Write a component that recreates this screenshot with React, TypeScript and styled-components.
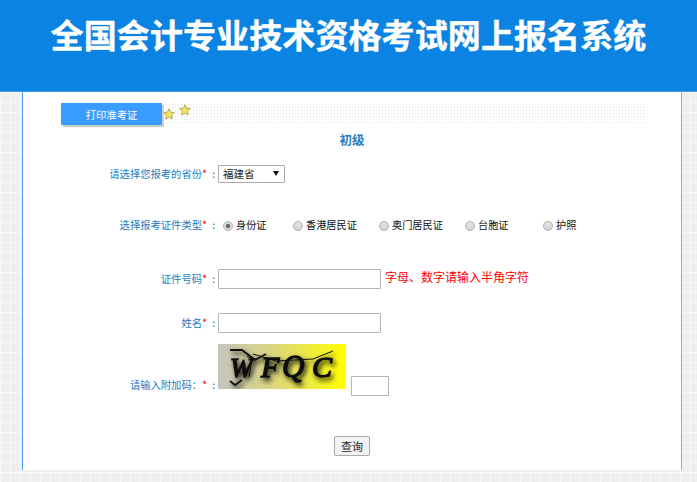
import React from 'react'
import styled, { createGlobalStyle } from 'styled-components'

const GlobalStyle = createGlobalStyle`
  html, body {
    margin: 0;
    padding: 0;
    height: 100%;
    overflow: hidden;
  }
  body {
    font-family: "Noto Sans CJK SC", "Liberation Sans", sans-serif;
    font-size: 10.3px;
    background-color: #efefef;
    background-image:
      linear-gradient(#f8f8f8 1px, transparent 1px),
      linear-gradient(90deg, #f8f8f8 1px, transparent 1px);
    background-size: 10px 10px;
    background-position: 0 2px;
  }
`

const Header = styled.header`
  height: 92px;
  background: #0a83e2;
  border-bottom: 1px solid #3c9df0;
  display: flex;
  justify-content: center;
  padding-top: 12px;
  box-sizing: border-box;
`

const Title = styled.h1`
  margin: 0;
  font-size: 33px;
  line-height: 44px;
  letter-spacing: 0.1px;
  font-weight: 700;
  color: #fff;
  white-space: nowrap;
  -webkit-text-stroke: 0.4px #fff;
`

const Panel = styled.main`
  width: 660px;
  height: 378px;
  margin-left: 22px;
  box-sizing: border-box;
  background: #fff;
  border-left: 1px solid #4a9ff0;
  border-right: 1px solid #7db6ee;
  padding-top: 11px;
`

const TabBar = styled.div`
  position: relative;
  width: 583px;
  height: 22px;
  margin-left: 38px;
  display: flex;
`

const Tab = styled.div`
  width: 101px;
  height: 22px;
  background: #3b9cff;
  color: #fff;
  font-size: 10.3px;
  line-height: 23px;
  text-align: center;
  box-shadow: 2px 2px 0 #ccc;
`

const Dots = styled.div`
  flex: 1;
  height: 20px;
  background-image: radial-gradient(#e2e2e2 0.8px, transparent 0.9px);
  background-size: 3px 3px;
`

const Star = styled.svg<{ $left: number; $top: number }>`
  position: absolute;
  left: ${(p) => p.$left}px;
  top: ${(p) => p.$top}px;
  width: 12px;
  height: 12px;
`

const Level = styled.div`
  margin-top: 6px;
  height: 18px;
  line-height: 18px;
  text-align: center;
  font-size: 12.5px;
  font-weight: 700;
  color: #2a7fc0;
`

const Row = styled.div<{ $height: number; $top?: number; $align?: string }>`
  display: flex;
  align-items: ${(p) => p.$align || 'center'};
  height: ${(p) => p.$height}px;
  margin-top: ${(p) => p.$top || 0}px;
`

const Label = styled.div<{ $top?: number }>`
  width: 192px;
  padding: ${(p) => p.$top || 0}px 0 2px 0;
  flex: none;
  text-align: right;
  color: #1a7cc0;
  font-size: 10.3px;
  white-space: nowrap;
`

const Req = styled.span`
  color: #f00;
  font-size: 11px;
`

const Colon = styled.span`
  margin-left: 5px;
  color: #1a5f90;
`

const Select = styled.div`
  width: 67px;
  height: 18px;
  margin-left: 3px;
  box-sizing: border-box;
  border: 1px solid #aaa;
  border-radius: 1px;
  padding-left: 4px;
  color: #222;
  line-height: 16px;
  display: flex;
  justify-content: space-between;
  font-size: 10.5px;
`

const Caret = styled.span`
  width: 0;
  height: 0;
  margin: 5px 5px 0 0;
  border-left: 3px solid transparent;
  border-right: 3px solid transparent;
  border-top: 5px solid #111;
`

const Radios = styled.div`
  display: flex;
  margin-left: 8px;
`

const RadioItem = styled.label<{ $width: number }>`
  display: flex;
  align-items: center;
  gap: 3px;
  width: ${(p) => p.$width}px;
  padding-bottom: 2px;
  color: #111;
  font-size: 10.2px;
  white-space: nowrap;
`

const RadioDot = styled.span<{ $on?: boolean }>`
  width: 10px;
  height: 10px;
  margin-top: 4px;
  border-radius: 50%;
  box-sizing: border-box;
  border: 1px solid #b0b0b0;
  background: ${(p) =>
    p.$on
      ? 'radial-gradient(circle, #666 0 1.8px, #dedede 2.6px)'
      : 'linear-gradient(#e2e2e2, #d4d4d4)'};
`

const TextInput = styled.input`
  width: 163px;
  height: 20px;
  margin-left: 3px;
  box-sizing: border-box;
  border: 1px solid #b4b4b4;
  border-radius: 1px;
  padding: 0;
  background: #fff;
`

const Hint = styled.span`
  margin: 0 0 6px 4px;
  color: #f00;
  font-size: 12px;
  white-space: nowrap;
`

const CaptchaField = styled.div`
  display: flex;
  align-items: flex-end;
  margin-left: 3px;
`

const CaptchaInput = styled.input`
  width: 38px;
  height: 20px;
  margin-left: 5px;
  margin-bottom: -7px;
  box-sizing: border-box;
  border: 1px solid #b4b4b4;
  border-radius: 1px;
  padding: 0;
  background: #fff;
`

const CaptchaImage = styled.svg`
  display: block;
  width: 128px;
  height: 45px;
`

const SubmitRow = styled.div`
  display: flex;
  margin-top: 47px;
  padding-left: 311px;
`

const Submit = styled.button`
  width: 36px;
  height: 20px;
  padding: 0;
  box-sizing: border-box;
  border: 1px solid #aaa;
  border-radius: 2px;
  background: #f2f2f2;
  color: #222;
  font-family: inherit;
  font-size: 11px;
  line-height: 16px;
`

const starPath = 'M6 .8 7.6 4.2 11.3 4.7 8.6 7.2 9.3 11 6 9.1 2.7 11 3.4 7.2.7 4.7 4.4 4.2Z'

function StarIcon({ left, top }: { left: number; top: number }) {
  return (
    <Star $left={left} $top={top} viewBox="0 0 12 12">
      <path d={starPath} fill="#f4e35c" stroke="#a89a3a" strokeWidth="0.8" strokeLinejoin="round" />
    </Star>
  )
}

function Captcha() {
  return (
    <CaptchaImage viewBox="0 0 128 45">
      <defs>
        <linearGradient id="captchaBg" x1="0" x2="1" y1="0" y2="0">
          <stop offset="0" stopColor="#c4c4c0" />
          <stop offset="0.45" stopColor="#dcd77a" />
          <stop offset="1" stopColor="#ffff00" />
        </linearGradient>
        <filter id="captchaShadow" x="-20%" y="-30%" width="140%" height="160%">
          <feDropShadow dx="2" dy="3" stdDeviation="2.6" floodColor="#000" floodOpacity="0.9" />
        </filter>
      </defs>
      <rect width="128" height="45" fill="url(#captchaBg)" />
      <g
        filter="url(#captchaShadow)"
        fontFamily="Liberation Serif, serif"
        fontStyle="italic"
        fill="#111"
        stroke="#111"
        strokeWidth="1.4"
      >
        <text x="12" y="33" fontSize="27">W</text>
        <text x="43" y="33" fontSize="30">F</text>
        <text x="64" y="33" fontSize="31">Q</text>
        <text x="94" y="33" fontSize="30">C</text>
        <path d="M12 6 24 6 37 16 48 10" fill="none" strokeWidth="1.8" />
        <path d="M29 12 34 15 31 33" fill="none" strokeWidth="1" />
        <path d="M35 10 58 17 95 15 115 7" fill="none" strokeWidth="1" />
        <path d="M12 37 17 41 24 36" fill="none" strokeWidth="1.8" />
      </g>
    </CaptchaImage>
  )
}

const idTypes = [
  { name: '身份证', width: 70, on: true },
  { name: '香港居民证', width: 86 },
  { name: '奥门居民证', width: 86 },
  { name: '台胞证', width: 78 },
  { name: '护照', width: 50 },
]

export default function App() {
  return (
    <>
      <GlobalStyle />
      <Header>
        <Title>全国会计专业技术资格考试网上报名系统</Title>
      </Header>
      <Panel>
        <TabBar>
          <Tab>打印准考证</Tab>
          <Dots />
          <StarIcon left={102} top={5} />
          <StarIcon left={118} top={1} />
        </TabBar>
        <Level>初级</Level>
        <Row $height={20} $top={15}>
          <Label>
            请选择您报考的省份<Req>*</Req>
            <Colon>:</Colon>
          </Label>
          <Select>
            福建省
            <Caret />
          </Select>
        </Row>
        <Row $height={20} $top={31}>
          <Label>
            选择报考证件类型<Req>*</Req>
            <Colon>:</Colon>
          </Label>
          <Radios>
            {idTypes.map((t) => (
              <RadioItem key={t.name} $width={t.width}>
                <RadioDot $on={t.on} />
                {t.name}
              </RadioItem>
            ))}
          </Radios>
        </Row>
        <Row $height={20} $top={34}>
          <Label>
            证件号码<Req>*</Req>
            <Colon>:</Colon>
          </Label>
          <TextInput />
          <Hint>字母、数字请输入半角字符</Hint>
        </Row>
        <Row $height={20} $top={24}>
          <Label>
            姓名<Req>*</Req>
            <Colon>:</Colon>
          </Label>
          <TextInput />
        </Row>
        <Row $height={45} $top={11} $align="flex-start">
          <Label $top={32}>
            请输入附加码：<Req>*</Req>
            <Colon>:</Colon>
          </Label>
          <CaptchaField>
            <Captcha />
            <CaptchaInput />
          </CaptchaField>
        </Row>
        <SubmitRow>
          <Submit>查询</Submit>
        </SubmitRow>
      </Panel>
    </>
  )
}
